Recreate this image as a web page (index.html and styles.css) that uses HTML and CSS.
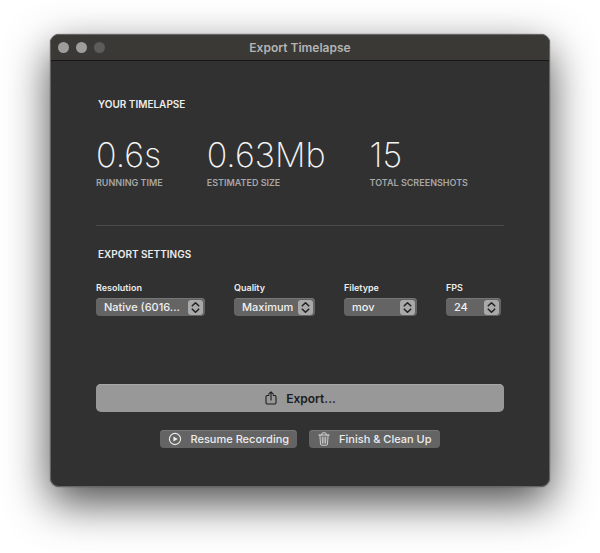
FILE: index.html
```
<!DOCTYPE html>
<html lang="en">
<head>
<meta charset="UTF-8">
<title>Export Timelapse</title>
<link rel="stylesheet" href="styles.css">
</head>
<body>
	<div class="window">
		<header class="titlebar">
			<div class="lights">
				<span class="light"></span>
				<span class="light"></span>
				<span class="light light-off"></span>
			</div>
			<h1>Export Timelapse</h1>
		</header>

		<main class="content">
			<h2>YOUR TIMELAPSE</h2>
			<div class="stats">
				<div class="stat">
					<div class="value">0.6s</div>
					<div class="caption">RUNNING TIME</div>
				</div>
				<div class="stat">
					<div class="value">0.63Mb</div>
					<div class="caption">ESTIMATED SIZE</div>
				</div>
				<div class="stat">
					<div class="value">15</div>
					<div class="caption">TOTAL SCREENSHOTS</div>
				</div>
			</div>

			<hr>

			<h2>EXPORT SETTINGS</h2>
			<div class="settings">
				<div class="field field-resolution">
					<label for="resolution">Resolution</label>
					<div class="popup">
						<select id="resolution"><option>Native (6016...</option></select>
						<svg class="arrows" viewBox="0 0 14 14"><path d="M4 5.400 7 2.600l3 2.800M4 8.600l3 2.800 3-2.800"/></svg>
					</div>
				</div>
				<div class="field field-quality">
					<label for="quality">Quality</label>
					<div class="popup">
						<select id="quality"><option>Maximum</option></select>
						<svg class="arrows" viewBox="0 0 14 14"><path d="M4 5.400 7 2.600l3 2.800M4 8.600l3 2.800 3-2.800"/></svg>
					</div>
				</div>
				<div class="field field-filetype">
					<label for="filetype">Filetype</label>
					<div class="popup">
						<select id="filetype"><option>mov</option></select>
						<svg class="arrows" viewBox="0 0 14 14"><path d="M4 5.400 7 2.600l3 2.800M4 8.600l3 2.800 3-2.800"/></svg>
					</div>
				</div>
				<div class="field field-fps">
					<label for="fps">FPS</label>
					<div class="popup">
						<select id="fps"><option>24</option></select>
						<svg class="arrows" viewBox="0 0 14 14"><path d="M4 5.400 7 2.600l3 2.800M4 8.600l3 2.800 3-2.800"/></svg>
					</div>
				</div>
			</div>

			<button type="button" class="export">
				<svg class="icon" viewBox="0 0 14 14"><path d="M4.800 4.500H3.200Q2 4.500 2 5.700v6.100Q2 13 3.200 13h7.600q1.200 0 1.200-1.200V5.700Q12 4.500 10.800 4.500H9.200M7 9V1M4.700 3.200 7 .9l2.300 2.300"/></svg>
				Export...
			</button>

			<div class="actions">
				<button type="button" class="small">
					<svg class="icon" viewBox="0 0 14 14"><circle cx="7" cy="7" r="5.600"/><path class="solid" d="M5.400 4.500v5L9.800 7z"/></svg>
					Resume Recording
				</button>
				<button type="button" class="small">
					<svg class="icon trash" viewBox="0 0 14 14"><path d="M1.800 3h10.400M4.900 3V1.600q0-.8.8-.8h2.600q.8 0 .8.8V3M2.900 3l.6 9q.1 1.200 1.200 1.200h4.600q1.100 0 1.200-1.200l.6-9M5.200 5l.2 6.200M7 5v6.200M8.800 5l-.2 6.200"/></svg>
					Finish &amp; Clean Up
				</button>
			</div>
		</main>
	</div>
</body>
</html>
```

FILE: styles.css
```
* {
	box-sizing: border-box;
	margin: 0;
	padding: 0;
}

body {
	padding: 34px 50px 66px;
	background-color: #fff;
	color: #ececec;
	font-family: Inter, "Liberation Sans", sans-serif;
}

.window {
	border: 1px solid #666;
	border-radius: 9px;
	background-color: #313131;
	box-shadow: 0 0 1px #222, 0 16px 44px rgba(0, 0, 0, 0.7);
}

.titlebar {
	display: grid;
	grid-template-columns: 1fr auto 1fr;
	align-items: center;
	height: 26px;
	padding: 0 7px;
	border-bottom: 1px solid #161616;
	border-radius: 8px 8px 0 0;
	background-color: #3a3936;
}

.lights {
	display: flex;
	gap: 7px;
}

.light {
	width: 11px;
	height: 11px;
	border-radius: 50%;
	background-color: #9d9d9c;
}

.light-off {
	background-color: #5d5c5b;
}

h1 {
	color: #b4b4b3;
	font-size: 12px;
	font-weight: 600;
}

.content {
	padding: 35px 45px 38px;
}

h2 {
	padding-left: 2px;
	font-size: 10px;
	font-weight: 600;
	line-height: 16px;
}

.stats {
	display: flex;
	gap: 44px;
	margin-top: 23px;
}

.value {
	color: #f4f4f4;
	font-size: 34px;
	font-weight: 200;
	line-height: 40px;
}

.caption {
	margin-top: 1px;
	color: #a6a6a6;
	font-size: 9px;
	font-weight: 600;
	line-height: 14px;
}

hr {
	margin: 35px 0 20px;
	border: 0;
	border-top: 1px solid #4a4a4a;
}

.settings {
	display: flex;
	gap: 29px;
	margin-top: 19px;
}

.field label {
	display: block;
	margin-bottom: 3px;
	font-size: 9px;
	font-weight: 600;
	line-height: 14px;
}

.field-resolution {
	width: 109px;
}

.field-quality {
	width: 81px;
}

.field-filetype {
	width: 73px;
}

.field-fps {
	width: 55px;
}

.popup {
	position: relative;
}

.popup select {
	appearance: none;
	display: block;
	width: 100%;
	height: 18px;
	padding: 0 18px 0 8px;
	border: 0;
	border-radius: 4px;
	background-color: #646464;
	box-shadow: inset 0 1px #777;
	color: #f0f0f0;
	font: 500 11px/18px Inter, "Liberation Sans", sans-serif;
}

/* sits over the right end of the select */
.arrows {
	position: absolute;
	top: 2px;
	right: 2px;
	width: 15px;
	height: 15px;
	border-radius: 3px;
	background-color: #a9a9a9;
	fill: none;
	stroke: #222;
	stroke-width: 1.5;
	stroke-linecap: round;
	stroke-linejoin: round;
	pointer-events: none;
}

button {
	display: flex;
	align-items: center;
	justify-content: center;
	gap: 8px;
	border: 0;
	font-family: inherit;
}

.icon {
	width: 14px;
	height: 14px;
	fill: none;
	stroke: currentColor;
	stroke-width: 1.1;
	stroke-linecap: round;
	stroke-linejoin: round;
}

.icon .solid {
	fill: currentColor;
	stroke: none;
}

.trash {
	stroke-width: 0.8;
}

.export {
	width: 100%;
	height: 28px;
	margin-top: 68px;
	border-radius: 5px;
	background-color: #989898;
	box-shadow: inset 0 1px #a8a8a8;
	color: #1c1c1c;
	font-size: 12px;
	font-weight: 600;
}

.actions {
	display: flex;
	justify-content: center;
	gap: 12px;
	margin-top: 18px;
}

.small {
	height: 18px;
	padding: 0 8px;
	border-radius: 4px;
	background-color: #646464;
	box-shadow: inset 0 1px #777;
	color: #ececec;
	font-size: 11px;
	font-weight: 500;
}
```
